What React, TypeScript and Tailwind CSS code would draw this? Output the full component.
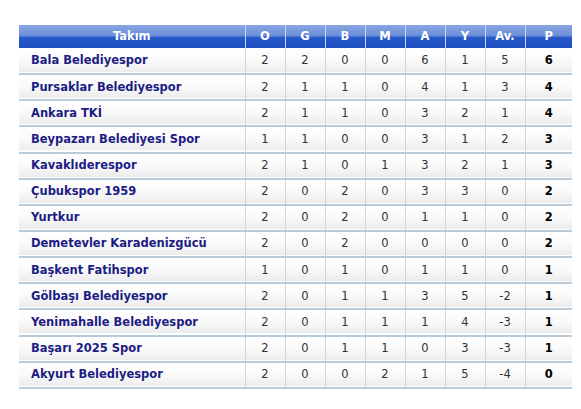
const rows: [string, number, number, number, number, number, number, number, number][] = [
  ["Bala Belediyespor", 2, 2, 0, 0, 6, 1, 5, 6],
  ["Pursaklar Belediyespor", 2, 1, 1, 0, 4, 1, 3, 4],
  ["Ankara TKİ", 2, 1, 1, 0, 3, 2, 1, 4],
  ["Beypazarı Belediyesi Spor", 1, 1, 0, 0, 3, 1, 2, 3],
  ["Kavaklıderespor", 2, 1, 0, 1, 3, 2, 1, 3],
  ["Çubukspor 1959", 2, 0, 2, 0, 3, 3, 0, 2],
  ["Yurtkur", 2, 0, 2, 0, 1, 1, 0, 2],
  ["Demetevler Karadenizgücü", 2, 0, 2, 0, 0, 0, 0, 2],
  ["Başkent Fatihspor", 1, 0, 1, 0, 1, 1, 0, 1],
  ["Gölbaşı Belediyespor", 2, 0, 1, 1, 3, 5, -2, 1],
  ["Yenimahalle Belediyespor", 2, 0, 1, 1, 1, 4, -3, 1],
  ["Başarı 2025 Spor", 2, 0, 1, 1, 0, 3, -3, 1],
  ["Akyurt Belediyespor", 2, 0, 0, 2, 1, 5, -4, 0],
];

const heads = ["O", "G", "B", "M", "A", "Y", "Av."];

export default function App() {
  return (
    <div className="min-h-[409px] w-[581px] bg-white pt-[25px] pl-[19px] font-['DejaVu_Sans',sans-serif] text-[11.5px]">
      <table className="w-[553px] table-fixed border-collapse">
        <colgroup>
          <col className="w-[226px]" />
          {heads.map((h) => (
            <col key={h} className="w-[40px]" />
          ))}
          <col className="w-[47px]" />
        </colgroup>
        <thead>
          <tr className="h-[23px] bg-[linear-gradient(to_bottom,#8aa6e2_0%,#6d90da_45%,#2658c8_55%,#1c4fc2_100%)] text-white">
            <th className="border-r border-[#c9d6f0] text-center font-bold">Takım</th>
            {heads.map((h) => (
              <th key={h} className="border-r border-[#c9d6f0] text-center font-bold">
                {h}
              </th>
            ))}
            <th className="text-center font-bold">P</th>
          </tr>
        </thead>
        <tbody>
          {rows.map((r) => (
            <tr
              key={r[0]}
              className="h-[26.15px] border-b-2 border-[#b9cbd9] bg-[linear-gradient(to_bottom,#ffffff_0%,#fafafa_50%,#ececec_100%)]"
            >
              <td className="border-r border-[#d4d4d4] pl-[12px] font-bold text-[#1c1c84]">{r[0]}</td>
              {r.slice(1, 8).map((v, i) => (
                <td key={i} className="border-r border-[#d4d4d4] text-center text-[#333]">
                  {v}
                </td>
              ))}
              <td className="text-center font-bold text-black">{r[8]}</td>
            </tr>
          ))}
        </tbody>
      </table>
    </div>
  );
}
